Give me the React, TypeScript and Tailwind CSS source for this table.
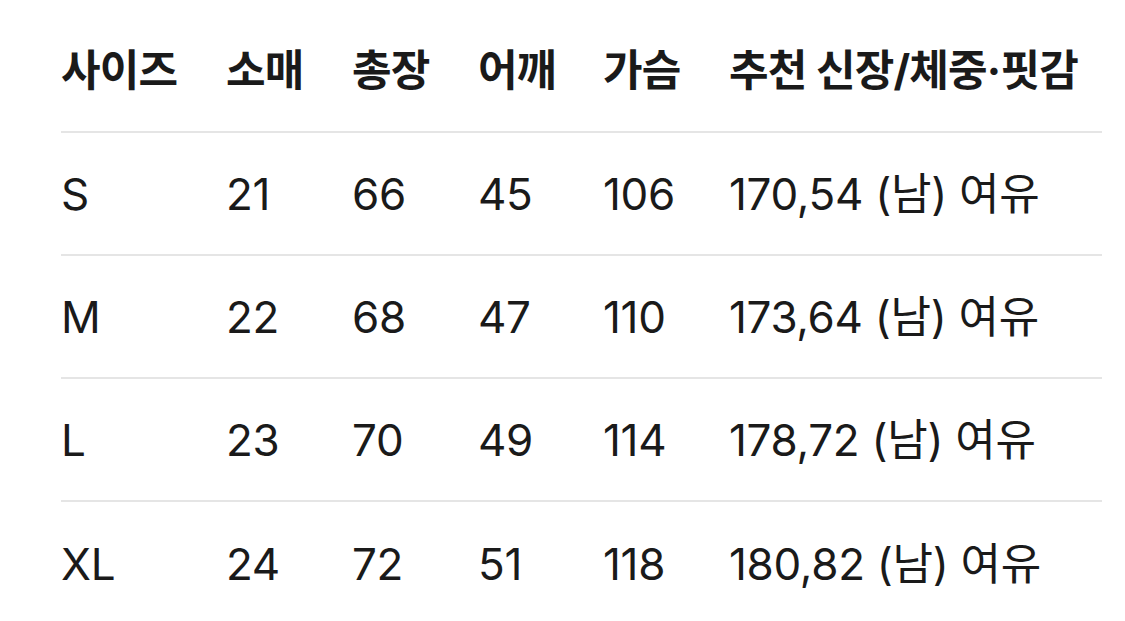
const headers = ['사이즈', '소매', '총장', '어깨', '가슴', '추천 신장/체중·핏감'];

const rows = [
  ['S', '21', '66', '45', '106', '170,54 (남) 여유'],
  ['M', '22', '68', '47', '110', '173,64 (남) 여유'],
  ['L', '23', '70', '49', '114', '178,72 (남) 여유'],
  ['XL', '24', '72', '51', '118', '180,82 (남) 여유'],
];

const cols = 'grid grid-cols-[165px_126px_126px_125px_126px_1fr]';

export default function App() {
  return (
    <div
      className="w-[1125px] h-[621px] bg-white overflow-hidden pl-[61px] pr-[23px] text-[#1a1a1a]"
      style={{ fontFamily: 'Inter, "Noto Sans CJK KR", sans-serif' }}
    >
      {/* Header */}
      <div className={`${cols} h-[133px] pt-[10px] items-center border-b-2 border-[#e5e5e5]`}>
        {headers.map((h) => (
          <div key={h} className="text-[43px] font-bold tracking-[-0.8px] whitespace-nowrap">
            {h}
          </div>
        ))}
      </div>

      {/* Rows */}
      {rows.map((row, i) => (
        <div
          key={row[0]}
          className={`${cols} h-[123px] items-center ${i < rows.length - 1 ? 'border-b-2 border-[#e5e5e5]' : ''}`}
        >
          {row.map((cell, j) => (
            <div key={j} className="text-[44px] tracking-[-0.3px] whitespace-nowrap">
              {cell}
            </div>
          ))}
        </div>
      ))}
    </div>
  );
}
